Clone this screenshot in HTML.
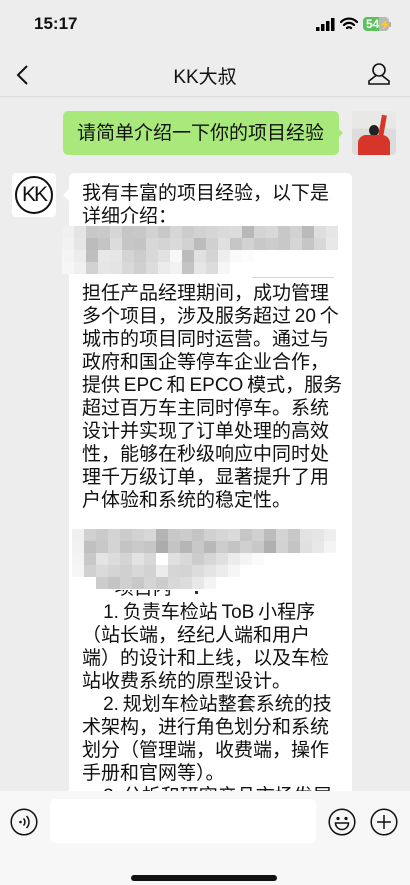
<!DOCTYPE html>
<html><head><meta charset="utf-8"><style>
*{margin:0;padding:0;box-sizing:border-box}
body{width:410px;height:885px;overflow:hidden;background:#ededed;font-family:"Liberation Sans","Noto Sans CJK SC",sans-serif;position:relative;color:#111}
.abs{position:absolute}
.txt{font-size:19px;line-height:23px;letter-spacing:0;white-space:nowrap}
.px{position:absolute;display:grid;grid-auto-rows:12px}
.px i{display:block;width:12px;height:12px}
</style></head><body>
<div class="abs" style="left:34px;top:14px;font-size:17px;font-weight:bold;">15:17</div>
<svg class="abs" style="left:316px;top:18px" width="20" height="13"><rect x="0" y="9" width="3.5" height="4" fill="#000"/><rect x="5" y="6" width="3.5" height="7" fill="#000"/><rect x="10" y="3" width="3.5" height="10" fill="#000"/><rect x="15" y="0" width="3.5" height="13" fill="#000"/></svg>
<svg class="abs" style="left:340px;top:17px" width="18" height="14" viewBox="0 0 18 14"><path d="M1 5a11 11 0 0 1 16 0M4 8a7 7 0 0 1 10 0M7 11a3 3 0 0 1 4 0" stroke="#000" stroke-width="2.2" fill="none" stroke-linecap="round"/></svg>
<div class="abs" style="left:363px;top:17px;width:26px;height:14px;border-radius:4px;background:linear-gradient(90deg,#5cc15c 0 62%,#b8b8b8 62%);color:#fff;font-size:12px;font-weight:bold;line-height:14px;padding-left:3px">54<span style="font-size:10px">⚡</span></div>
<div class="abs" style="left:389px;top:22px;width:2px;height:5px;background:#aaa;border-radius:1px"></div>

<svg class="abs" style="left:15px;top:64px" width="14" height="22"><path d="M12 2L3 11l9 9" stroke="#111" stroke-width="2" fill="none"/></svg>
<div class="abs" style="left:0;width:410px;top:62px;text-align:center;font-size:19px;">KK大叔</div>
<svg class="abs" style="left:367px;top:62px" width="24" height="24" viewBox="0 0 24 24"><circle cx="12" cy="8" r="6" stroke="#111" stroke-width="1.6" fill="none"/><path d="M9 13.5L2 19v3h20v-3l-7-5.5" stroke="#111" stroke-width="1.6" fill="none"/></svg>
<div class="abs" style="left:0;top:96px;width:410px;height:1px;background:#dcdcdc"></div>

<div class="abs" style="left:63px;top:111px;width:276px;height:44px;background:#a9e97b;border-radius:5px"></div>
<div class="abs" style="left:337px;top:127px;width:0;height:0;border-top:6px solid transparent;border-bottom:6px solid transparent;border-left:6px solid #a9e97b"></div>
<div class="abs txt" style="left:77px;top:122px">请简单介绍一下你的项目经验</div>
<div class="abs" style="left:352px;top:111px;width:44px;height:44px;border-radius:4px;background:linear-gradient(180deg,#e8e8e6 0 40%,#dcdcda 40%);overflow:hidden">
<div class="abs" style="left:17px;top:14px;width:10px;height:11px;border-radius:50%;background:#222"></div>
<div class="abs" style="left:6px;top:24px;width:32px;height:22px;border-radius:8px 8px 0 0;background:#d8352a"></div>
<div class="abs" style="left:28px;top:4px;width:5px;height:22px;background:#d8352a;transform:rotate(10deg)"></div>
</div>

<div class="abs" style="left:12px;top:173px;width:44px;height:44px;border-radius:4px;background:#fff"></div>
<div class="abs" style="left:15px;top:176px;width:38px;height:38px;border-radius:50%;border:2px solid #111;text-align:center;font-size:21px;line-height:34px;letter-spacing:-2px">KK</div>
<div class="abs" style="left:69px;top:173px;width:283px;height:640px;background:#fff;border-radius:5px"></div>
<div class="abs" style="left:63px;top:189px;width:0;height:0;border-top:6px solid transparent;border-bottom:6px solid transparent;border-right:6px solid #fff"></div>

<div class="abs txt" style="left:82px;top:182px">我有丰富的项目经验，以下是<br>详细介绍：</div>

<div class="px" style="left:62px;top:226px;grid-template-columns:repeat(23,12px)">
<i style="background:#f0f0f0"></i><i style="background:#e4e4e4"></i><i style="background:#c8c8c8"></i><i style="background:#cacaca"></i><i style="background:#d6d6d6"></i><i style="background:#c6c6c6"></i><i style="background:#c8c8c8"></i><i style="background:#d2d2d2"></i><i style="background:#c8c8c8"></i><i style="background:#d6d6d6"></i><i style="background:#cccccc"></i><i style="background:#d2d2d2"></i><i style="background:#d6d6d6"></i><i style="background:#dadada"></i><i style="background:#dcdcdc"></i><i style="background:#b8b8b8"></i><i style="background:#d4d4d4"></i><i style="background:#d8d8d8"></i><i style="background:#c8c8c8"></i><i style="background:#d2d2d2"></i><i style="background:#bababa"></i><i style="background:#dedede"></i><i style="background:#e6e6e6"></i>
<i style="background:#f2f2f2"></i><i style="background:#e6e6e6"></i><i style="background:#bcbcbc"></i><i style="background:#c4c4c4"></i><i style="background:#dcdcdc"></i><i style="background:#c6c6c6"></i><i style="background:#c4c4c4"></i><i style="background:#d8d8d8"></i><i style="background:#d4d4d4"></i><i style="background:#dadada"></i><i style="background:#d2d2d2"></i><i style="background:#bcbcbc"></i><i style="background:#d0d0d0"></i><i style="background:#e0e0e0"></i><i style="background:#c6c6c6"></i><i style="background:#d2d2d2"></i><i style="background:#c8c8c8"></i><i style="background:#cccccc"></i><i style="background:#c8c8c8"></i><i style="background:#d6d6d6"></i><i style="background:#c6c6c6"></i><i style="background:#d8d8d8"></i><i style="background:#e8e8e8"></i>
</div>
<div class="px" style="left:62px;top:250px;grid-template-columns:repeat(16,12px)">
<i style="background:#f4f4f4"></i><i style="background:#ececec"></i><i style="background:#bebebe"></i><i style="background:#e8e8e8"></i><i style="background:#e6e6e6"></i><i style="background:#d4d4d4"></i><i style="background:#cccccc"></i><i style="background:#d8d8d8"></i><i style="background:#e2e2e2"></i><i style="background:#f8f8f8"></i><i style="background:#bcbcbc"></i><i style="background:#e0e0e0"></i><i style="background:#d4d4d4"></i><i style="background:#eeeeee"></i><i style="background:#fafafa"></i><i style="background:#fcfcfc"></i>
<i style="background:#f6f6f6"></i><i style="background:#f0f0f0"></i><i style="background:#d2d2d2"></i><i style="background:#e6e6e6"></i><i style="background:#e4e4e4"></i><i style="background:#d8d8d8"></i><i style="background:#d0d0d0"></i><i style="background:#dcdcdc"></i><i style="background:#ececec"></i><i style="background:#f2f2f2"></i><i style="background:#c4c4c4"></i><i style="background:#e6e6e6"></i><i style="background:#dcdcdc"></i><i style="background:#f6f6f6"></i><i style="background:#ffffff"></i><i style="background:#ffffff"></i>
</div>
<div class="abs" style="left:252px;top:277px;width:82px;height:1px;background:#d6d6d6"></div>

<div class="abs txt" style="left:82px;top:282px">担任产品经理期间，成功管理<br>多个项目，涉及服务超过&#8201;20&#8201;个<br>城市的项目同时运营。通过与<br>政府和国企等停车企业合作，<br>提供&#8201;EPC&#8201;和&#8201;EPCO&#8201;模式，服务<br>超过百万车主同时停车。系统<br>设计并实现了订单处理的高效<br>性，能够在秒级响应中同时处<br>理千万级订单，显著提升了用<br>户体验和系统的稳定性。</div>

<div class="px" style="left:72px;top:529px;grid-template-columns:repeat(22,12px)">
<i style="background:#f0f0f0"></i><i style="background:#d0d0d0"></i><i style="background:#cacaca"></i><i style="background:#d4d4d4"></i><i style="background:#cccccc"></i><i style="background:#d2d2d2"></i><i style="background:#d8d8d8"></i><i style="background:#b4b4b4"></i><i style="background:#c8c8c8"></i><i style="background:#cccccc"></i><i style="background:#c4c4c4"></i><i style="background:#d0d0d0"></i><i style="background:#d6d6d6"></i><i style="background:#dadada"></i><i style="background:#c6c6c6"></i><i style="background:#d0d0d0"></i><i style="background:#bcbcbc"></i><i style="background:#d4d4d4"></i><i style="background:#c8c8c8"></i><i style="background:#e2e2e2"></i><i style="background:#e6e6e6"></i><i style="background:#eeeeee"></i>
<i style="background:#f2f2f2"></i><i style="background:#c0c0c0"></i><i style="background:#c8c8c8"></i><i style="background:#d4d4d4"></i><i style="background:#c4c4c4"></i><i style="background:#cacaca"></i><i style="background:#c6c6c6"></i><i style="background:#acacac"></i><i style="background:#c4c4c4"></i><i style="background:#b6b6b6"></i><i style="background:#c8c8c8"></i><i style="background:#b8b8b8"></i><i style="background:#cccccc"></i><i style="background:#c4c4c4"></i><i style="background:#d0d0d0"></i><i style="background:#c8c8c8"></i><i style="background:#b0b0b0"></i><i style="background:#d2d2d2"></i><i style="background:#c4c4c4"></i><i style="background:#e0e0e0"></i><i style="background:#e8e8e8"></i><i style="background:#f4f4f4"></i>
</div>
<div class="px" style="left:72px;top:553px;grid-template-columns:repeat(18,12px)">
<i style="background:#f4f4f4"></i><i style="background:#c8c8c8"></i><i style="background:#e4e4e4"></i><i style="background:#dcdcdc"></i><i style="background:#d4d4d4"></i><i style="background:#e2e2e2"></i><i style="background:#d8d8d8"></i><i style="background:#ffffff"></i><i style="background:#e0e0e0"></i><i style="background:#d8d8d8"></i><i style="background:#cccccc"></i><i style="background:#d6d6d6"></i><i style="background:#e0e0e0"></i><i style="background:#ececec"></i><i style="background:#f4f4f4"></i><i style="background:#fafafa"></i><i style="background:#fff"></i><i style="background:#fff"></i>
<i style="background:#f6f6f6"></i><i style="background:#d0d0d0"></i><i style="background:#dadada"></i><i style="background:#d4d4d4"></i><i style="background:#d0d0d0"></i><i style="background:#d8d8d8"></i><i style="background:#d2d2d2"></i><i style="background:#ececec"></i><i style="background:#d6d6d6"></i><i style="background:#d4d4d4"></i><i style="background:#dcdcdc"></i><i style="background:#e4e4e4"></i><i style="background:#ececec"></i><i style="background:#f6f6f6"></i><i style="background:#fff"></i><i style="background:#fff"></i><i style="background:#fff"></i><i style="background:#fff"></i>
</div>
<div class="px" style="left:96px;top:577px;grid-template-columns:repeat(10,12px);grid-auto-rows:11px">
<i style="background:#cccccc"></i><i style="background:#c4c4c4"></i><i style="background:#d0d0d0"></i><i style="background:#c8c8c8"></i><i style="background:#d4d4d4"></i><i style="background:#cccccc"></i><i style="background:#d8d8d8"></i><i style="background:#dcdcdc"></i><i style="background:#e8e8e8"></i><i style="background:#f4f4f4"></i>
</div>
<div class="abs" style="left:82px;top:590px;width:90px;height:10px;overflow:hidden"><div class="txt" style="margin-top:-13px">-&nbsp;&nbsp;&nbsp;&nbsp;&nbsp;项目内容</div></div>
<div class="abs" style="left:195px;top:591px;width:3px;height:3px;background:#333"></div>

<div class="abs txt" style="left:82px;top:601px">&nbsp;&nbsp;&nbsp;&nbsp;1.&#8201;负责车检站&#8201;ToB&#8201;小程序<br>（站长端，经纪人端和用户<br>端）的设计和上线，以及车检<br>站收费系统的原型设计。<br>&nbsp;&nbsp;&nbsp;&nbsp;2.&#8201;规划车检站整套系统的技<br>术架构，进行角色划分和系统<br>划分（管理端，收费端，操作<br>手册和官网等）。<br>&nbsp;&nbsp;&nbsp;&nbsp;3.&#8201;分析和研究产品市场发展</div>

<div class="abs" style="left:0;top:791px;width:410px;height:94px;background:#f7f7f7"></div>
<div class="abs" style="left:50px;top:799px;width:266px;height:44px;background:#fff;border-radius:5px"></div>
<svg class="abs" style="left:10px;top:808px" width="28" height="28" viewBox="0 0 28 28"><circle cx="14" cy="14" r="12.8" stroke="#111" stroke-width="1.5" fill="none"/><circle cx="10.5" cy="14" r="1.3" fill="#111"/><path d="M13.5 10.5a5 5 0 0 1 0 7M16.5 8a8.5 8.5 0 0 1 0 12" stroke="#111" stroke-width="1.5" fill="none"/></svg>
<svg class="abs" style="left:328px;top:808px" width="28" height="28" viewBox="0 0 28 28"><circle cx="14" cy="14" r="12.8" stroke="#111" stroke-width="1.5" fill="none"/><circle cx="10" cy="10.5" r="1.6" fill="#111"/><circle cx="18" cy="10.5" r="1.6" fill="#111"/><path d="M7.5 15h13a6.5 6.5 0 0 1-13 0z" stroke="#111" stroke-width="1.5" fill="none"/></svg>
<svg class="abs" style="left:370px;top:808px" width="28" height="28" viewBox="0 0 28 28"><circle cx="14" cy="14" r="12.8" stroke="#111" stroke-width="1.5" fill="none"/><path d="M14 7v14M7 14h14" stroke="#111" stroke-width="1.5"/></svg>
<div class="abs" style="left:131px;top:875px;width:146px;height:6px;border-radius:3px;background:#111"></div>
</body></html>
